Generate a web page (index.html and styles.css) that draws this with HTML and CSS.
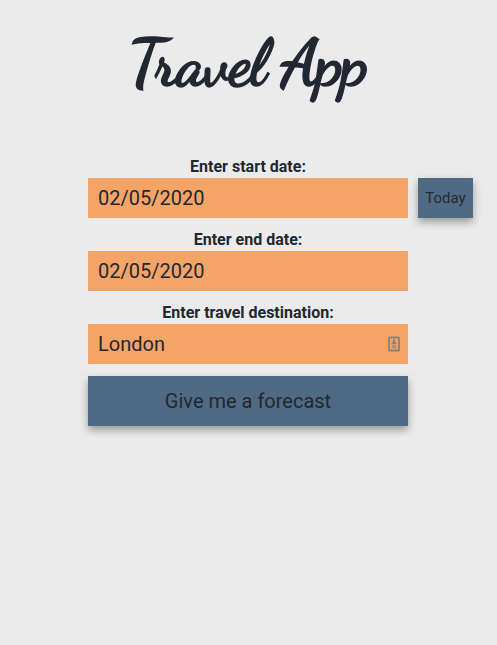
FILE: index.html
```html
<!DOCTYPE html>
<html lang="en">
<head>
<meta charset="utf-8">
<title>Travel App</title>
<link rel="stylesheet" href="styles.css">
</head>
<body>
<header class="header"><h1 class="title">Travel App</h1></header>
<main class="form">
  <div class="field">
    <label class="label" for="start">Enter start date:</label>
    <div class="row">
      <input class="input" id="start" type="text" value="02/05/2020">
      <button class="today" type="button">Today</button>
    </div>
  </div>
  <div class="field">
    <label class="label" for="end">Enter end date:</label>
    <input class="input" id="end" type="text" value="02/05/2020">
  </div>
  <div class="field">
    <label class="label" for="place">Enter travel destination:</label>
    <div class="row">
      <input class="input" id="place" type="text" value="London">
      <svg class="contact" viewBox="0 0 12 16" aria-hidden="true">
        <rect x="1" y="1.5" width="10" height="13" rx=".6" fill="none" stroke="#87837e" stroke-width="1.9"/>
        <path d="M5 3.2h2v2.4l1.3.8V8.2H3.7V6.4L5 5.6z" fill="#87837e"/>
        <path d="M3.7 10h4.6M3.7 11.7h4.6" stroke="#a88870" stroke-width="1.3"/>
      </svg>
    </div>
  </div>
  <button class="submit" type="button">Give me a forecast</button>
</main>
</body>
</html>
```

FILE: styles.css
```css
* {
  box-sizing: border-box;
}

body {
  margin: 0;
  min-height: 100vh;
  background: #ebebeb;
  color: #222831;
  font-family: Roboto, sans-serif;
}

.header {
  height: 157px;
  padding-top: 26px;
}

.title {
  margin: 0;
  font: 700 64px/76px "Dancing Script", cursive;
  letter-spacing: -1.1px;
  text-align: center;
  text-indent: -2px;
  white-space: nowrap;
  -webkit-text-stroke: 1.4px #222831;
}

.form {
  width: 320px;
  margin-left: 88px;
}

.field {
  margin-bottom: 12px;
}

.label {
  display: block;
  height: 21px;
  font-size: 16px;
  font-weight: 700;
  line-height: 19px;
  text-align: center;
}

.row {
  position: relative;
  display: flex;
  gap: 10px;
}

.input {
  display: block;
  flex: none;
  width: 320px;
  height: 40px;
  padding: 0 10px;
  border: 0;
  border-radius: 0;
  background: #f4a467;
  color: #222831;
  font: 20px Roboto, sans-serif;
}

.today,
.submit {
  padding: 0;
  border: 0;
  background: #506a83;
  color: #222831;
  font-family: Roboto, sans-serif;
  box-shadow: 0 4px 8px rgba(0, 0, 0, 0.35);
}

.today {
  flex: none;
  width: 55px;
  height: 40px;
  font-size: 15px;
}

.contact {
  position: absolute;
  top: 12px;
  right: 8px;
  width: 12px;
  height: 16px;
}

.submit {
  display: block;
  width: 320px;
  height: 50px;
  font-size: 20px;
}
```
